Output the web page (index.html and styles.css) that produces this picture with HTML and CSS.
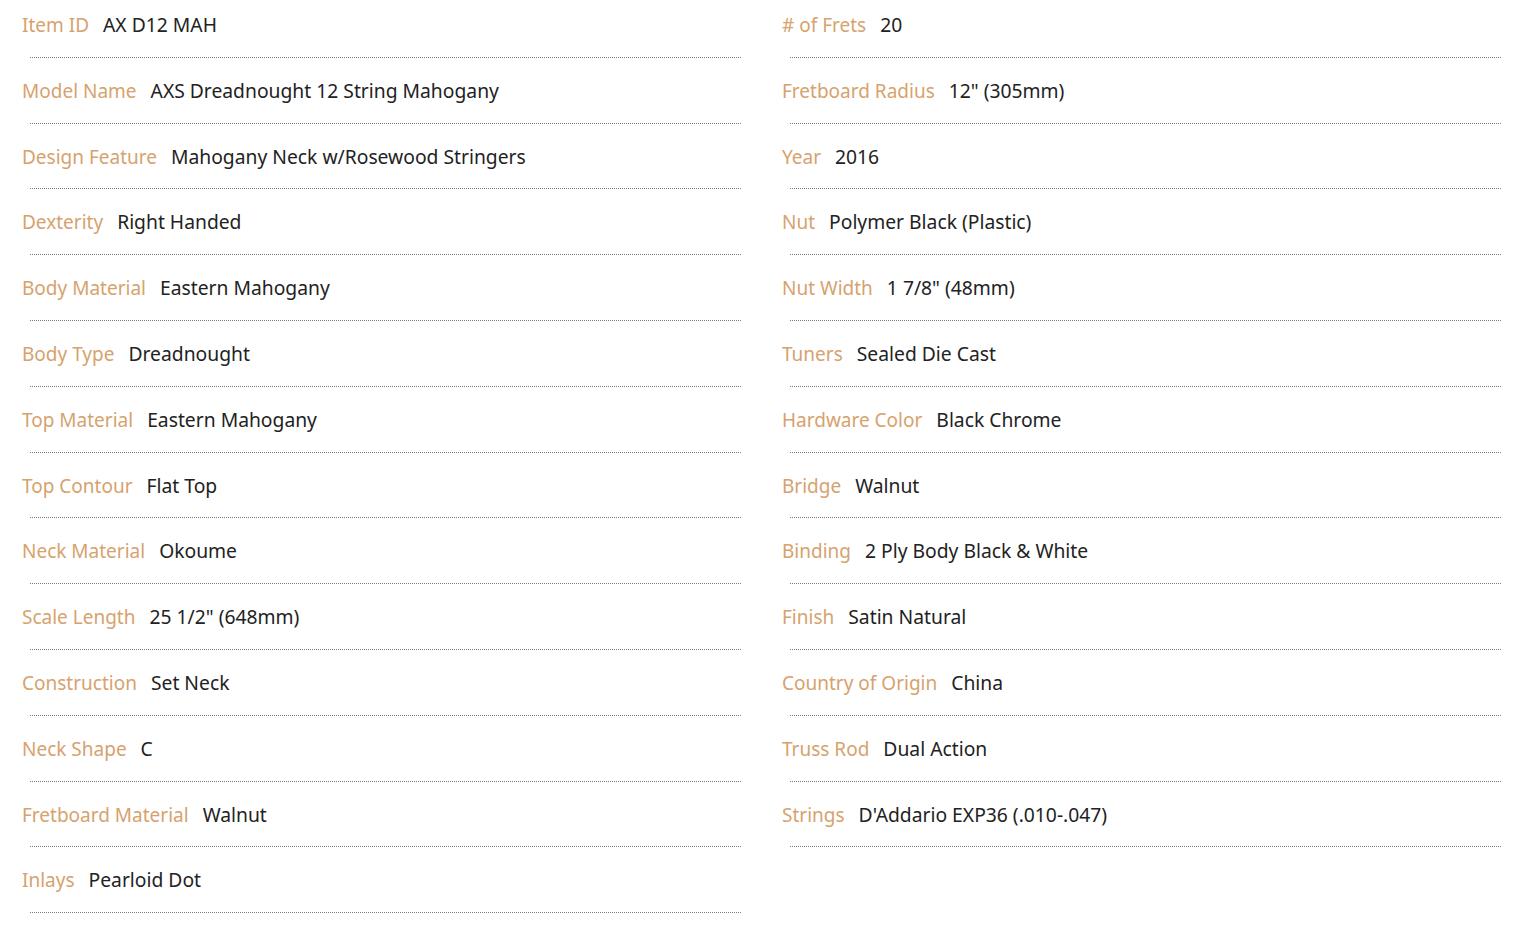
FILE: index.html
```html
<!DOCTYPE html>
<html>
<head>
<meta charset="utf-8">
<link rel="stylesheet" href="styles.css">
</head>
<body>
<div class="specs">
  <div class="col">
    <div class="row"><span class="label">Item ID</span><span class="value">AX D12 MAH</span></div>
    <div class="row"><span class="label">Model Name</span><span class="value">AXS Dreadnought 12 String Mahogany</span></div>
    <div class="row"><span class="label">Design Feature</span><span class="value">Mahogany Neck w/Rosewood Stringers</span></div>
    <div class="row"><span class="label">Dexterity</span><span class="value">Right Handed</span></div>
    <div class="row"><span class="label">Body Material</span><span class="value">Eastern Mahogany</span></div>
    <div class="row"><span class="label">Body Type</span><span class="value">Dreadnought</span></div>
    <div class="row"><span class="label">Top Material</span><span class="value">Eastern Mahogany</span></div>
    <div class="row"><span class="label">Top Contour</span><span class="value">Flat Top</span></div>
    <div class="row"><span class="label">Neck Material</span><span class="value">Okoume</span></div>
    <div class="row"><span class="label">Scale Length</span><span class="value">25 1/2" (648mm)</span></div>
    <div class="row"><span class="label">Construction</span><span class="value">Set Neck</span></div>
    <div class="row"><span class="label">Neck Shape</span><span class="value">C</span></div>
    <div class="row"><span class="label">Fretboard Material</span><span class="value">Walnut</span></div>
    <div class="row"><span class="label">Inlays</span><span class="value">Pearloid Dot</span></div>
  </div>
  <div class="col">
    <div class="row"><span class="label"># of Frets</span><span class="value">20</span></div>
    <div class="row"><span class="label">Fretboard Radius</span><span class="value">12" (305mm)</span></div>
    <div class="row"><span class="label">Year</span><span class="value">2016</span></div>
    <div class="row"><span class="label">Nut</span><span class="value">Polymer Black (Plastic)</span></div>
    <div class="row"><span class="label">Nut Width</span><span class="value">1 7/8" (48mm)</span></div>
    <div class="row"><span class="label">Tuners</span><span class="value">Sealed Die Cast</span></div>
    <div class="row"><span class="label">Hardware Color</span><span class="value">Black Chrome</span></div>
    <div class="row"><span class="label">Bridge</span><span class="value">Walnut</span></div>
    <div class="row"><span class="label">Binding</span><span class="value">2 Ply Body Black &amp; White</span></div>
    <div class="row"><span class="label">Finish</span><span class="value">Satin Natural</span></div>
    <div class="row"><span class="label">Country of Origin</span><span class="value">China</span></div>
    <div class="row"><span class="label">Truss Rod</span><span class="value">Dual Action</span></div>
    <div class="row"><span class="label">Strings</span><span class="value">D'Addario EXP36 (.010-.047)</span></div>
  </div>
</div>
</body>
</html>
```
FILE: styles.css
```css
html, body {
  margin: 0;
  padding: 0;
  background: #ffffff;
}
body {
  font-family: "Noto Sans", "Open Sans", sans-serif;
  font-size: 19.3px;
  width: 1536px;
  height: 938px;
  overflow: hidden;
}
.specs {
  display: grid;
  grid-template-columns: 760px 760px;
  padding-left: 22px;
}
.col {
  display: flex;
  flex-direction: column;
}
.row {
  display: flex;
  align-items: center;
  gap: 14px;
  height: 28px;
  line-height: 28px;
  padding-top: 19px;
  padding-bottom: 17.8px;
  position: relative;
  white-space: nowrap;
}
.row:first-child {
  padding-top: 11px;
}
.row::after {
  content: "";
  position: absolute;
  left: 8px;
  width: 711px;
  bottom: -1px;
  border-bottom: 1px dotted #7a7a7a;
}
.row + .row {
  margin-top: 1px;
}
.label {
  color: #d6a26e;
  font-size: 19px;
}
.value {
  color: #222222;
}
```
